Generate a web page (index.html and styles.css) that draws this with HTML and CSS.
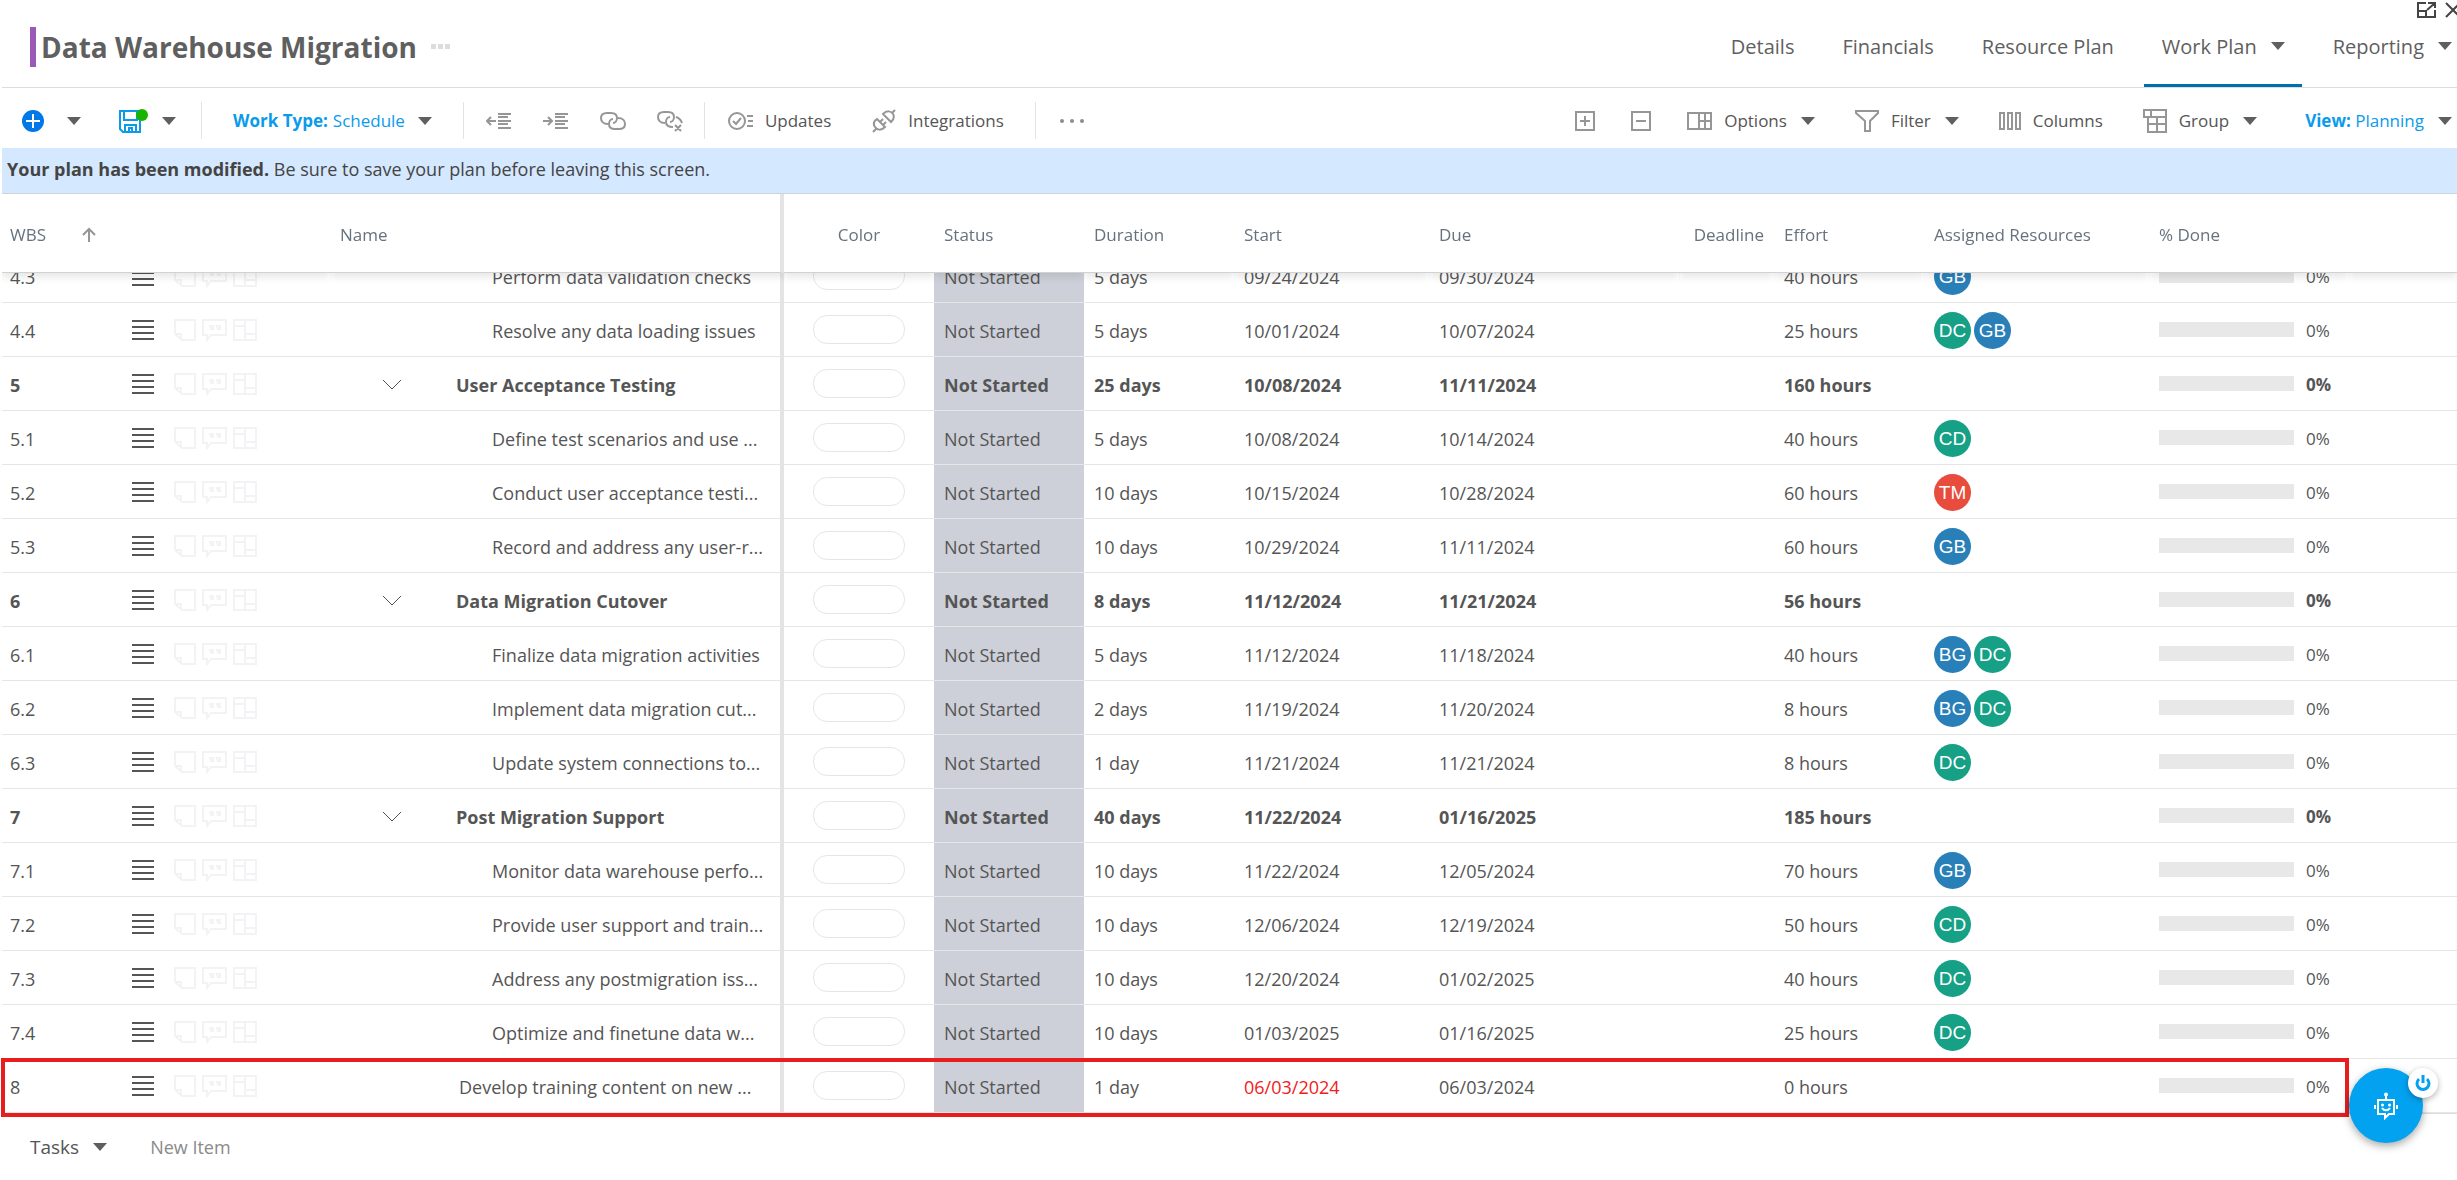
FILE: index.html
```html
<!DOCTYPE html>
<html lang="en">
<head>
  <meta charset="UTF-8" />
  <meta name="viewport" content="width=device-width, initial-scale=1.0" />
  <title>Data Warehouse Migration - Work Plan</title>
  <link rel="stylesheet" href="styles.css">
</head>
<body>
  <!-- Shared row icons -->
  <svg class="sprite" aria-hidden="true">
    <symbol id="i-lines" viewBox="0 0 22 22"><path d="M0 2h22M0 8h22M0 14h22M0 20h22" /></symbol>
    <symbol id="i-note" viewBox="0 0 22 24"><path d="M1 16V2h20v20H8zM1 16h6v6" /></symbol>
    <symbol id="i-chat" viewBox="0 0 25 24"><path d="M1 2h23v15H9l-4 5v-5H1zM8 8h3v3H9zM15 8h3v3h-2z" /></symbol>
    <symbol id="i-board" viewBox="0 0 24 24"><path d="M1 2h22v20H1zM12 2v20M1 8h11M12 16h11" /></symbol>
    <symbol id="i-chev" viewBox="0 0 20 12"><path d="M1 1l9 9 9-9" /></symbol>
  </svg>

  <div class="page">
    <header class="header">
      <div class="title">
        <h1>Data Warehouse Migration</h1>
        <button class="title-more" aria-label="More"><i></i><i></i><i></i></button>
      </div>
      <nav class="tabs">
        <a href="#">Details</a>
        <a href="#">Financials</a>
        <a href="#">Resource Plan</a>
        <a href="#" class="active">Work Plan <span class="caret"></span></a>
        <a href="#">Reporting <span class="caret"></span></a>
      </nav>
      <div class="window-buttons">
        <button aria-label="Open in window">
          <svg width="20" height="16" viewBox="0 0 20 16"><path d="M9 1H1v14h17V8M1 9h8v6M11 1h7v5M18 1l-8 7" /></svg>
        </button>
        <button aria-label="Close">
          <svg width="16" height="16" viewBox="0 0 16 16"><path d="M1 1l14 14M15 1L1 15" /></svg>
        </button>
      </div>
    </header>

    <div class="toolbar">
      <div class="tools">
        <button class="tool add" aria-label="Add">
          <svg width="22" height="22" viewBox="0 0 22 22"><circle cx="11" cy="11" r="11" /><path d="M11 4v14M4 11h14" /></svg>
          <span class="caret"></span>
        </button>
        <button class="tool save" aria-label="Save">
          <svg width="29" height="24" viewBox="0 0 29 24"><path d="M1 2h20v21H4l-3-3zM5 2v9h13V2M6 23v-7h11v7M10 23v-4h3v4" /><circle cx="23" cy="6" r="6" /></svg>
          <span class="caret"></span>
        </button>
        <button class="tool work-type blue"><b>Work Type:</b> Schedule <span class="caret"></span></button>
        <div class="tool-group icons">
          <button aria-label="Outdent"><svg width="26" height="18" viewBox="0 0 26 18"><path d="M12 2h13M12 5h10M12 9h13M12 12h10M12 16h13M1 9h9M5 5L1 9l4 4" /></svg></button>
          <button aria-label="Indent"><svg width="26" height="18" viewBox="0 0 26 18"><path d="M12 2h13M12 5h10M12 9h13M12 12h10M12 16h13M0 9h9M5 5l4 4-4 4" /></svg></button>
          <button aria-label="Link"><svg width="26" height="18" viewBox="0 0 26 18"><path d="M8 12C3 12 1 9 1 6s2-5 6-5h4c4 0 6 2 6 5s-2 5-4 5M18 6c5 0 7 3 7 6s-2 5-6 5h-4c-4 0-6-2-6-5s2-5 4-5" /></svg></button>
          <button aria-label="Unlink"><svg width="26" height="22" viewBox="0 0 26 22"><path d="M8 13C3 13 1 10 1 7s2-5 6-5h4c4 0 6 2 6 5s-2 5-4 5M19 7c3 1 5 3 6 6M16 17c-5 0-7-2-7-5s2-5 4-5M18 15l6 6M24 15l-6 6" /></svg></button>
        </div>
        <div class="tool-group named">
          <button><svg width="25" height="18" viewBox="0 0 25 18"><circle cx="9" cy="9" r="8" /><path d="M5 9l3 3 5-6M19 4h6M20 9h5M19 14h6" /></svg>Updates</button>
          <button><svg width="24" height="24" viewBox="0 0 24 24"><path d="M1 23l3-3M20 4l3-3M5 10l8 8c-4 4-8 3-10 0s-1-6 2-8zM11 5l8 8c3-3 4-5 2-8s-6-4-10 0zM8 13l3-3M11 16l3-3" /></svg>Integrations</button>
        </div>
        <button class="tool dots" aria-label="More actions"><i></i><i></i><i></i></button>
      </div>
      <div class="view-tools">
        <button aria-label="Expand all"><svg width="20" height="20" viewBox="0 0 20 20"><path d="M1 1h18v18H1zM10 5v10M5 10h10" /></svg></button>
        <button aria-label="Collapse all"><svg width="20" height="20" viewBox="0 0 20 20"><path d="M1 1h18v18H1zM5 10h10" /></svg></button>
        <button><svg width="25" height="18" viewBox="0 0 25 18"><path d="M1 1h23v16H1zM12 1v16M18 1v16M12 9h12" /></svg>Options <span class="caret"></span></button>
        <button><svg width="24" height="22" viewBox="0 0 24 22"><path d="M1 1h22v2l-8 8v10h-5V11L1 3z" /></svg>Filter <span class="caret"></span></button>
        <button><svg width="22" height="18" viewBox="0 0 22 18"><path d="M1 1h4v16H1zM9 1h4v16H9zM17 1h4v16h-4z" /></svg>Columns</button>
        <button><svg width="24" height="24" viewBox="0 0 24 24"><path d="M1 1h22v7H1zM8 1v7M5 8v15h18V8M14 8v15M5 15h18" /></svg>Group <span class="caret"></span></button>
        <button class="blue view"><span><b>View:</b> Planning</span> <span class="caret"></span></button>
      </div>
    </div>

    <p class="notice"><b>Your plan has been modified.</b> Be sure to save your plan before leaving this screen.</p>

    <main class="grid">
      <div class="scroller" id="scroller">
        <table>
          <colgroup>
            <col class="c-wbs"><col class="c-tools"><col class="c-name"><col class="c-color"><col class="c-status"><col class="c-duration"><col class="c-start"><col class="c-due"><col class="c-deadline"><col class="c-effort"><col class="c-people"><col class="c-done"><col>
          </colgroup>
          <thead>
            <tr>
              <th colspan="2"><span class="sorted">WBS <svg width="14" height="15" viewBox="0 0 14 15"><path d="M7 15V2M1 8l6-6 6 6" /></svg></span></th>
              <th class="name">Name</th>
              <th class="color">Color</th>
              <th>Status</th>
              <th>Duration</th>
              <th>Start</th>
              <th>Due</th>
              <th class="deadline">Deadline</th>
              <th>Effort</th>
              <th>Assigned Resources</th>
              <th>% Done</th>
              <th></th>
            </tr>
          </thead>
          <tbody id="rows"></tbody>
        </table>
      </div>
      <div class="highlight"></div>
    </main>

    <footer class="footer">
      <button class="tasks">Tasks <span class="caret"></span></button>
      <input type="text" placeholder="New Item" aria-label="New Item">
    </footer>
  </div>

  <div class="bot">
    <button class="bot-main" aria-label="Assistant">
      <svg width="24" height="28" viewBox="0 0 24 28"><path d="M12 3v5M4 8h16v14h-5l-4 4v-4H4zM1 13v4M23 13v4M8 16c2 3 6 3 8 0" /><circle cx="12" cy="2.500" r="2" /><circle cx="8.500" cy="13" r="1.500" /><circle cx="15.500" cy="13" r="1.500" /></svg>
    </button>
    <button class="bot-power" aria-label="Turn off">
      <svg width="16" height="16" viewBox="0 0 16 16"><path d="M4 4a6 6 0 1 0 8 0M8 0v8" /></svg>
    </button>
  </div>

  <script src="script.js"></script>
</body>
</html>
```

FILE: styles.css
```css
* {
  box-sizing: border-box;
}
body {
  margin: 0;
  font-family: 'Open Sans', 'Noto Sans', sans-serif;
  font-size: 18px;
  color: #555;
  background: #fff;
  overflow: hidden;
}
button {
  font: inherit;
  color: inherit;
  background: none;
  border: none;
  padding: 0;
  margin: 0;
  display: flex;
  align-items: center;
  cursor: pointer;
  white-space: nowrap;
}
svg {
  fill: none;
  stroke: #969696;
  stroke-width: 2;
  flex: none;
}
.sprite {
  position: absolute;
  width: 0;
  height: 0;
}
.page {
  display: flex;
  flex-direction: column;
  height: 100vh;
  padding-left: 2px;
}
.caret {
  display: inline-block;
  border: 7px solid transparent;
  border-top: 8px solid #5f5f5f;
  border-bottom: 0;
  margin-left: 14px;
}
.blue {
  color: #0a9bea;
}

/* Header */
.header {
  position: relative;
  display: flex;
  justify-content: space-between;
  height: 88px;
  border-bottom: 1px solid #ddd;
}
.title {
  display: flex;
  align-items: center;
  padding: 6px 0 0 28px;
}
.title h1 {
  margin: 0;
  padding-left: 5px;
  border-left: 6px solid #9b59b6;
  font-size: 28px;
  line-height: 40px;
  color: #5f5f5f;
}
.title-more {
  gap: 2px;
  margin-left: 14px;
}
.title-more i {
  width: 5px;
  height: 5px;
  background: #ddd;
}
.tabs {
  display: flex;
  gap: 13px;
}
.tabs a {
  display: flex;
  align-items: center;
  padding: 8px 17px 0 18px;
  font-size: 20px;
  color: #5f5f5f;
  text-decoration: none;
  border-bottom: 3px solid transparent;
}
.tabs a.active {
  border-bottom-color: #006fb0;
}
.tabs a:last-child {
  padding-right: 5px;
}
.window-buttons {
  position: absolute;
  top: 2px;
  right: -4px;
  display: flex;
  gap: 8px;
}
.window-buttons svg {
  stroke: #444;
}

/* Toolbar */
.toolbar {
  display: flex;
  justify-content: space-between;
  height: 60px;
  padding: 14px 5px 9px 20px;
  font-size: 17px;
}
.tools, .view-tools, .tool-group {
  display: flex;
  align-items: center;
}
.tool-group, .dots {
  height: 37px;
  border-left: 1px solid #e3e3e3;
}
.add {
  margin-right: 38px;
}
.add .caret {
  margin-left: 23px;
}
.add svg {
  stroke: #fff;
}
.add circle {
  fill: #0078e8;
  stroke: none;
}
.save svg {
  stroke: #0a9bea;
}
.save circle {
  fill: #18b400;
  stroke: none;
}
.work-type {
  height: 37px;
  margin: 0 31px 0 25px;
  padding-left: 31px;
  gap: 5px;
  border-left: 1px solid #e3e3e3;
}
.work-type .caret {
  margin-left: 8px;
}
.icons {
  padding: 0 21px 0 22px;
  gap: 31px;
}
.named {
  padding: 0 31px 0 23px;
  gap: 41px;
}
.named svg {
  margin-right: 12px;
}
.dots {
  padding-left: 24px;
  gap: 6px;
}
.dots i {
  width: 4px;
  height: 4px;
  border-radius: 50%;
  background: #8c8c8c;
}
.view-tools {
  gap: 40px;
}
.view-tools svg {
  margin-right: 12px;
}
.view-tools button[aria-label] {
  margin-right: -4px;
}
.view-tools button[aria-label] svg {
  margin: 0;
}
.view {
  margin-left: 8px;
}

.notice {
  margin: 0;
  padding: 0 5px;
  height: 46px;
  line-height: 42px;
  color: #444;
  background: #d4e8ff;
  border-bottom: 1px solid #ccd4da;
}

/* Plan grid */
.grid {
  position: relative;
  flex: 1;
  min-height: 0;
}
.scroller {
  height: 100%;
  overflow: auto;
  scrollbar-width: none;
}
table {
  width: 100%;
  table-layout: fixed;
  border-collapse: separate;
  border-spacing: 0;
}
.c-wbs { width: 120px; }
.c-tools { width: 208px; }
.c-name { width: 454px; }
.c-color, .c-status, .c-duration, .c-effort { width: 150px; }
.c-start { width: 195px; }
.c-due { width: 250px; }
.c-deadline { width: 95px; }
.c-people { width: 225px; }
.c-done { width: 200px; }
th {
  position: sticky;
  top: 0;
  z-index: 1;
  height: 79px;
  padding: 2px 10px 0;
  background: #fff;
  border-bottom: 1px solid #d2d2d2;
  box-shadow: 0 4px 8px rgba(0, 0, 0, 0.1);
  font-size: 17px;
  font-weight: normal;
  text-align: left;
  color: #66727d;
  white-space: nowrap;
  clip-path: inset(0 0 -12px 0);
}
td {
  height: 54px;
  padding: 2px 10px 0;
  border-bottom: 1px solid #e6e6e6;
  white-space: nowrap;
}
th:first-child, td:first-child {
  padding-left: 8px;
}
.sorted {
  display: flex;
  align-items: center;
  gap: 36px;
}
.name {
  border-right: 4px solid #e4e4e6;
}
th.color {
  text-align: center;
}
th.deadline {
  text-align: right;
}
.parent td {
  font-weight: bold;
}
.row-tools {
  display: flex;
  align-items: center;
  margin-top: -2px;
}
.row-tools svg {
  stroke: #f3f3f5;
  margin-right: 6px;
}
.row-tools .lines {
  stroke: #555;
  margin-right: 20px;
}
.task {
  display: flex;
  align-items: center;
  padding-left: 119px;
}
.task.child {
  padding-left: 152px;
}
.parent .task {
  padding-left: 42px;
}
.task svg {
  margin-right: 54px;
  stroke: #555;
  stroke-width: 1;
}
.pill {
  display: block;
  width: 92px;
  height: 29px;
  margin: -2px auto 0;
  border: 1px solid #e6e6e6;
  border-radius: 14px;
}
.status {
  background: #ced0d9;
}
.late {
  color: #f02020;
}
.people {
  display: flex;
  gap: 3px;
  margin-top: -1px;
}
.avatar {
  width: 37px;
  height: 37px;
  border-radius: 50%;
  line-height: 37px;
  text-align: center;
  font-family: 'Liberation Sans', sans-serif;
  font-size: 19px;
  font-weight: normal;
  color: #fff;
}
.blue-bg { background: #2980b9; }
.green-bg { background: #16a085; }
.red-bg { background: #e74c3c; }
.done {
  display: flex;
  align-items: center;
  gap: 12px;
  font-size: 17px;
}
.done progress {
  appearance: none;
  width: 135px;
  height: 15px;
  margin-top: -3px;
  border: none;
  background: #e8e8e8;
}
.done progress::-webkit-progress-bar {
  background: #e8e8e8;
}
/* Frame round the newly added task */
.highlight {
  position: absolute;
  left: -1px;
  bottom: -4px;
  width: 2348px;
  height: 59px;
  border: 4px solid #e81e1e;
  z-index: 2;
  pointer-events: none;
}

.footer {
  display: flex;
  align-items: center;
  height: 67px;
  padding: 0 0 0 28px;
  border-top: 1px solid #ddd;
}
.tasks {
  font-size: 19px;
}
.footer input {
  width: 300px;
  margin-left: 43px;
  padding: 0;
  border: none;
  outline: none;
  font: inherit;
}
.footer input::placeholder {
  color: #8a8a8a;
}

/* Assistant button */
.bot {
  position: fixed;
  right: 34px;
  bottom: 37px;
  z-index: 3;
}
.bot-main {
  justify-content: center;
  width: 74px;
  height: 75px;
  border-radius: 50%;
  background: #03a2f0;
  box-shadow: 0 3px 8px rgba(0, 0, 0, 0.35);
}
.bot-main svg {
  stroke: #fff;
}
.bot-main circle {
  fill: #fff;
  stroke: none;
}
.bot-power {
  position: absolute;
  top: 0;
  right: -15px;
  justify-content: center;
  width: 30px;
  height: 30px;
  border-radius: 50%;
  background: #fff;
  box-shadow: 0 2px 6px rgba(0, 0, 0, 0.3);
}
.bot-power svg {
  stroke: #03a2f0;
  stroke-width: 3;
}
```

FILE: script.js
```js
// wbs, name, duration, start, due, effort, resources
const tasks = [
  ['4.3', 'Perform data validation checks', '5 days', '09/24/2024', '09/30/2024', '40 hours', 'GB'],
  ['4.4', 'Resolve any data loading issues', '5 days', '10/01/2024', '10/07/2024', '25 hours', 'DC GB'],
  ['5', 'User Acceptance Testing', '25 days', '10/08/2024', '11/11/2024', '160 hours', ''],
  ['5.1', 'Define test scenarios and use ...', '5 days', '10/08/2024', '10/14/2024', '40 hours', 'CD'],
  ['5.2', 'Conduct user acceptance testi...', '10 days', '10/15/2024', '10/28/2024', '60 hours', 'TM'],
  ['5.3', 'Record and address any user-r...', '10 days', '10/29/2024', '11/11/2024', '60 hours', 'GB'],
  ['6', 'Data Migration Cutover', '8 days', '11/12/2024', '11/21/2024', '56 hours', ''],
  ['6.1', 'Finalize data migration activities', '5 days', '11/12/2024', '11/18/2024', '40 hours', 'BG DC'],
  ['6.2', 'Implement data migration cut...', '2 days', '11/19/2024', '11/20/2024', '8 hours', 'BG DC'],
  ['6.3', 'Update system connections to...', '1 day', '11/21/2024', '11/21/2024', '8 hours', 'DC'],
  ['7', 'Post Migration Support', '40 days', '11/22/2024', '01/16/2025', '185 hours', ''],
  ['7.1', 'Monitor data warehouse perfo...', '10 days', '11/22/2024', '12/05/2024', '70 hours', 'GB'],
  ['7.2', 'Provide user support and train...', '10 days', '12/06/2024', '12/19/2024', '50 hours', 'CD'],
  ['7.3', 'Address any postmigration iss...', '10 days', '12/20/2024', '01/02/2025', '40 hours', 'DC'],
  ['7.4', 'Optimize and finetune data w...', '10 days', '01/03/2025', '01/16/2025', '25 hours', 'DC'],
  ['8', 'Develop training content on new ...', '1 day', '06/03/2024', '06/03/2024', '0 hours', '']
];
const colors = { GB: 'blue-bg', BG: 'blue-bg', DC: 'green-bg', CD: 'green-bg', TM: 'red-bg' };

function icon(id, w, h, cls) {
  return `<svg class="${cls || ''}" width="${w}" height="${h}"><use href="#i-${id}"/></svg>`;
}

document.getElementById('rows').innerHTML = tasks.map(([wbs, name, duration, start, due, effort, people]) => {
  const child = wbs.includes('.');
  const parent = !child && wbs !== '8';
  const avatars = people.split(' ').filter(Boolean)
    .map(p => `<span class="avatar ${colors[p]}">${p}</span>`).join('');
  return `<tr class="${parent ? 'parent' : ''}">
    <td>${wbs}</td>
    <td><div class="row-tools">${icon('lines', 22, 22, 'lines')}${icon('note', 22, 24)}${icon('chat', 25, 24)}${icon('board', 24, 24)}</div></td>
    <td class="name"><div class="task ${child ? 'child' : ''}">${parent ? icon('chev', 20, 12) : ''}${name}</div></td>
    <td><span class="pill"></span></td>
    <td class="status">Not Started</td>
    <td>${duration}</td>
    <td class="${wbs === '8' ? 'late' : ''}">${start}</td>
    <td>${due}</td>
    <td></td>
    <td>${effort}</td>
    <td><div class="people">${avatars}</div></td>
    <td><div class="done"><progress value="0" max="100" aria-label="${wbs} done"></progress>0%</div></td>
    <td></td>
  </tr>`;
}).join('');

// open the plan at its last task
const scroller = document.getElementById('scroller');
scroller.scrollTop = scroller.scrollHeight;
```
